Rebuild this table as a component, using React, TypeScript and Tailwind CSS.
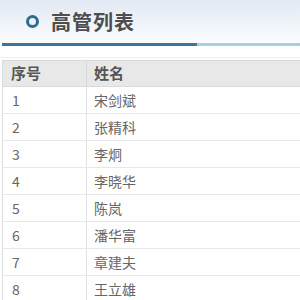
const rows = [
  { no: 1, name: "宋剑斌" },
  { no: 2, name: "张精科" },
  { no: 3, name: "李炯" },
  { no: 4, name: "李晓华" },
  { no: 5, name: "陈岚" },
  { no: 6, name: "潘华富" },
  { no: 7, name: "章建夫" },
  { no: 8, name: "王立雄" },
];

export default function App() {
  return (
    <div
      className="w-[300px] h-[300px] overflow-hidden bg-white"
      style={{ fontFamily: '"Noto Sans CJK SC", "Liberation Sans", sans-serif' }}
    >
      {/* title */}
      <div className="h-[43px] flex items-center pl-[26px] gap-[12px] bg-gradient-to-b from-[#e2e9f2] to-[#fbfcfe]">
        <span className="w-[13px] h-[13px] rounded-full border-[3px] border-[#2c6d8f]" />
        <span className="text-[20px] font-bold text-[#4d4d4d] leading-none tracking-[1px]">
          高管列表
        </span>
      </div>
      <div className="flex h-[3px] ml-[2px]">
        <div className="w-[195px] bg-[#3b779c]" />
        <div className="flex-1 bg-[#a9cde3]" />
      </div>
      <div className="h-[12px] border-b border-[#f0f0f0]" />

      {/* table */}
      <div className="ml-[2px] mt-[2px] border-l border-[#dcdcdc]">
        <div className="flex h-[27px] bg-[#e8e8e8] border-y border-[#dadada] text-[15px] font-bold text-[#555]">
          <div className="w-[84px] flex items-center pl-[8px] border-r border-[#d6d6d6]">序号</div>
          <div className="flex-1 flex items-center pl-[7px]">姓名</div>
        </div>
        {rows.map((r) => (
          <div
            key={r.no}
            className="flex h-[27px] border-b border-[#e8e8e8] text-[14px] text-[#666]"
          >
            <div className="w-[84px] flex items-center pl-[9px] border-r border-[#e2e2e2]">{r.no}</div>
            <div className="flex-1 flex items-center pl-[7px]">{r.name}</div>
          </div>
        ))}
      </div>
    </div>
  );
}
